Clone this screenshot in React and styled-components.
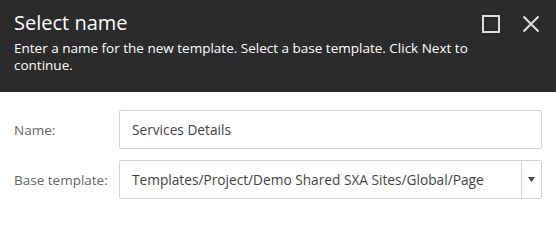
import React from "react";
import styled, { createGlobalStyle } from "styled-components";

const GlobalStyle = createGlobalStyle`
  body {
    margin: 0;
    background: #ffffff;
    font-family: "Open Sans", "Liberation Sans", sans-serif;
  }
`;

const Dialog = styled.div`
  width: 556px;
  height: 243px;
  background: #ffffff;
`;

const Header = styled.div`
  background: #2b2b2b;
  height: 92px;
  box-sizing: border-box;
  padding: 9px 14px 0 14px;
  position: relative;
  color: #ffffff;
`;

const Title = styled.h1`
  margin: 0;
  font-size: 20px;
  font-weight: 400;
  line-height: 28px;
`;

const Subtitle = styled.p`
  margin: 3px 0 0 0;
  font-size: 13.5px;
  line-height: 17px;
  max-width: 470px;
`;

const Controls = styled.div`
  position: absolute;
  top: 15px;
  right: 16px;
  display: flex;
  gap: 22px;
`;

const IconButton = styled.button`
  width: 18px;
  height: 18px;
  padding: 0;
  border: 0;
  background: none;
  display: flex;
  cursor: pointer;
`;

const Body = styled.div`
  padding: 18px 14px 0 14px;
  display: grid;
  grid-template-columns: 105px 1fr;
  row-gap: 11px;
  align-items: center;
`;

const Label = styled.label`
  font-size: 13.5px;
  color: #666666;
`;

const Field = styled.div`
  height: 39px;
  box-sizing: border-box;
  border: 1px solid #d3d3d3;
  border-radius: 2px;
  display: flex;
  align-items: stretch;
  font-size: 13.7px;
  color: #444444;
`;

const FieldText = styled.div`
  flex: 1;
  display: flex;
  align-items: center;
  padding-left: 12px;
`;

const Caret = styled.div`
  width: 19px;
  border-left: 1px solid #d3d3d3;
  display: flex;
  align-items: center;
  justify-content: center;
`;

export default function App() {
  return (
    <>
      <GlobalStyle />
      <Dialog>
        <Header>
          <Title>Select name</Title>
          <Subtitle>
            Enter a name for the new template. Select a base template. Click Next to continue.
          </Subtitle>
          <Controls>
            <IconButton aria-label="Maximize">
              <svg width="18" height="18" viewBox="0 0 18 18">
                <rect x="1" y="1" width="16" height="16" fill="none" stroke="#dddddd" strokeWidth="2" />
              </svg>
            </IconButton>
            <IconButton aria-label="Close">
              <svg width="18" height="18" viewBox="0 0 18 18">
                <path d="M1.5 1.5 L16.5 16.5 M16.5 1.5 L1.5 16.5" stroke="#dddddd" strokeWidth="2.2" />
              </svg>
            </IconButton>
          </Controls>
        </Header>
        <Body>
          <Label>Name:</Label>
          <Field>
            <FieldText>Services Details</FieldText>
          </Field>
          <Label>Base template:</Label>
          <Field>
            <FieldText>Templates/Project/Demo Shared SXA Sites/Global/Page</FieldText>
            <Caret>
              <svg width="7" height="5" viewBox="0 0 7 5">
                <path d="M0 0 L7 0 L3.5 5 Z" fill="#444444" />
              </svg>
            </Caret>
          </Field>
        </Body>
      </Dialog>
    </>
  );
}
